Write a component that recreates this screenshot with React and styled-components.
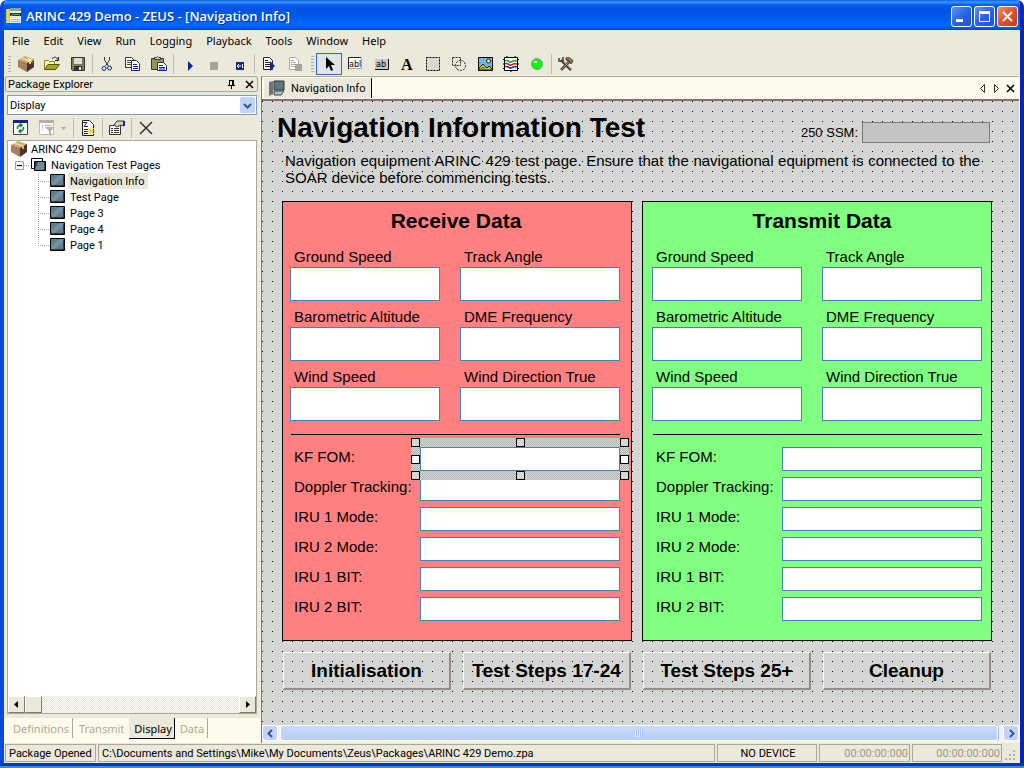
import React, { useState } from 'react'
import styled, { createGlobalStyle } from 'styled-components'

const readings = ['Ground Speed', 'Track Angle', 'Barometric Altitude', 'DME Frequency', 'Wind Speed', 'Wind Direction True']
const statuses = ['KF FOM:', 'Doppler Tracking:', 'IRU 1 Mode:', 'IRU 2 Mode:', 'IRU 1 BIT:', 'IRU 2 BIT:']
const menus = ['File', 'Edit', 'View', 'Run', 'Logging', 'Playback', 'Tools', 'Window', 'Help']
const pages = ['Navigation Info', 'Test Page', 'Page 3', 'Page 4', 'Page 1']
const steps = ['Initialisation', 'Test Steps 17-24', 'Test Steps 25+', 'Cleanup']
const handles = [['0%', '0%'], ['50%', '0%'], ['100%', '0%'], ['0%', '50%'], ['100%', '50%'], ['0%', '100%'], ['50%', '100%'], ['100%', '100%']]

const Icon = ({ children, size = 16 }) => (
    <svg width={size} height={size} viewBox={`0 0 ${size} ${size}`} aria-hidden="true">{children}</svg>
)

const AppIcon = () => (
    <Icon>
        <path d="M0 1h4v14H0z" fill="#d8c838" />
        <path d="M1 2h2M1 5h2M1 8h2M1 11h2M1 14h2" stroke="#fff8a0" />
        <path d="M4 0h11v15H4z" fill="#e6ece4" />
        <path d="M4 0h11v3H4z" fill="#8fa39a" />
        <path d="M4 5h11v3H4z" fill="#20332a" />
        <path d="M5 8l2-2 2 1 2-1 3 1" stroke="#2ee04a" fill="none" />
        <path d="M5 11.500h9M5 13.500h9" stroke="#b4bdb4" />
    </Icon>
)

const BoxIcon = ({ spark }) => (
    <Icon>
        <path d="M0 4l7-4 9 3-7 5z" fill="#cfa878" />
        <path d="M0 4l9 3v9l-9-5z" fill="#a07e5a" />
        <path d="M9 7l7-4v8l-7 5z" fill="#4b3526" />
        <path d="M3 2l9 3v3" stroke="#eddcae" strokeWidth="1.500" fill="none" />
        <path d="M1 7l7 3M1 10l7 3" stroke="#b89068" fill="none" />
        {spark && <path d="M12 0v8M8 4h8M9.500 1.500l5 5M14.500 1.500l-5 5" stroke="#fff27a" />}
        {spark && <path d="M11 3h2v2h-2z" fill="#fff" />}
    </Icon>
)

const OpenIcon = () => (
    <Icon>
        <path d="M.5 13.500v-9h4l1 1h5v3" fill="#fff6a0" stroke="#8f8a24" />
        <path d="M.5 13.500l3.500-5h11.500l-4 5z" fill="#a8a428" stroke="#55520e" />
        <path d="M8 3c2-3 5-2 6 1M14.500 1v3.500H11" stroke="#222" fill="none" />
    </Icon>
)

const SaveIcon = () => (
    <Icon>
        <path d="M1.500 1.500h13v13h-12l-1-1z" fill="#7d7c50" stroke="#333" />
        <path d="M4 2h8v6H4z" fill="#dcdcd4" />
        <path d="M4 10h8v4H4z" fill="#333" />
        <path d="M9 11h2v3H9z" fill="#eee" />
    </Icon>
)

const CutIcon = () => (
    <Icon>
        <path d="M5.500 1v3l4 6M10.500 1v3l-4 6" stroke="#333" fill="none" />
        <circle cx="5" cy="12.500" r="2" fill="none" stroke="#12278c" />
        <circle cx="10.500" cy="12" r="2" fill="none" stroke="#12278c" />
    </Icon>
)

const CopyIcon = () => (
    <Icon>
        <path d="M.5 1.500h6l3 3v7h-9z" fill="#fff" stroke="#333" />
        <path d="M2 4.500h4M2 6.500h5M2 8.500h4" stroke="#444" />
        <path d="M6.500 4.500h5l3 3v7h-8z" fill="#fff" stroke="#12278c" />
        <path d="M8 8.500h4M8 10.500h5M8 12.500h5" stroke="#12278c" />
    </Icon>
)

const PasteIcon = () => (
    <Icon>
        <path d="M.5 2.500h12v11H.5z" fill="#96955a" stroke="#333" />
        <path d="M3.500 3.500h6v-2h-2l-1-1-1 1h-2z" fill="#e8e48c" stroke="#333" />
        <path d="M6.500 6.500h6l3 3v5h-9z" fill="#fff" stroke="#12278c" />
        <path d="M8 9.500h4M8 11.500h6M8 13h6" stroke="#12278c" />
    </Icon>
)

const PlayIcon = () => <Icon><path d="M8 5l5 5-5 5z" fill="#12278c" /></Icon>
const StopIcon = () => <Icon><path d="M4 6h8v8H4z" fill="#a3a3a0" /></Icon>
const BackIcon = () => (
    <Icon>
        <path d="M4 6h8v8H4z" fill="#12278c" />
        <path d="M5 10h4M7 8l-2 2 2 2M10.500 8v4" stroke="#fff" fill="none" />
    </Icon>
)

const StepIcon = ({ off }) => (
    <Icon>
        <path d="M2.500 1.500h6l3 3v9h-9z" fill="#fff" stroke={off ? '#aaa89e' : '#222'} />
        <path d="M4 4.500h3M4 6.500h5M4 8.500h5M4 10.500h5" stroke={off ? '#aaa89e' : '#222'} />
        {off ? <path d="M8 8h7v7H8z" fill="#a3a3a0" /> : <path d="M9 5l5 5-5 5z" fill="#12278c" />}
    </Icon>
)

const PointerIcon = () => <Icon><path d="M5 1v12l3-3 2 5 2-1-2-5h4z" fill="#000" /></Icon>
const TextBoxIcon = () => (
    <Icon>
        <path d="M1 2h14v11H1z" fill="#fff" />
        <path d="M1 12.500h13.500V2" stroke="#aaa89e" fill="none" />
        <path d="M14 1.500H1.500V13" stroke="#222" fill="none" />
        <IconText x="2" y="11">abl</IconText>
    </Icon>
)
const LabelIcon = () => (
    <Icon>
        <path d="M2 3h13v10H2z" fill="#c8c8c4" />
        <path d="M2 13.500h13.500V3" stroke="#111" fill="none" />
        <IconText x="3" y="11">ab</IconText>
    </Icon>
)
const LetterIcon = () => <Icon><LetterText x="2" y="14">A</LetterText></Icon>
const FrameIcon = () => (
    <Icon>
        <path d="M1.500 1.500h13v13h-13z" fill="#d9d9d4" stroke="#000" strokeDasharray="2 1" />
    </Icon>
)
const ShapeIcon = () => (
    <Icon>
        <path d="M1.500 1.500h8v8h-8z" fill="none" stroke="#222" strokeDasharray="2 1" />
        <circle cx="9.500" cy="9.500" r="5" fill="none" stroke="#222" strokeDasharray="2 1" />
    </Icon>
)
const PictureIcon = () => (
    <Icon>
        <path d="M1.500 1.500h14v13h-14z" fill="#72b4e6" stroke="#000" />
        <circle cx="11.500" cy="5" r="2" fill="#fff27a" stroke="#222" />
        <path d="M2 12l4-4 4 4 2-2 3 3v1H2z" fill="#c8c818" stroke="#222" />
        <path d="M4 13l2-2 2 2" stroke="#188028" fill="none" />
    </Icon>
)
const ChartIcon = () => (
    <Icon>
        <path d="M1.500 1.500h13v13h-13z" fill="#fff" stroke="#000" />
        <path d="M0 3.500h2M0 8h2M0 12.500h2M14 3.500h2M14 8h2M14 12.500h2M4 0v2M8 14v2M12 0v2" stroke="#000" />
        <path d="M2 5c3-2 4 2 6 1s3-2 6-1" stroke="#00b020" fill="none" strokeWidth="1.500" />
        <path d="M2 8c3-2 4 2 6 1s3-2 6-1" stroke="#e01010" fill="none" strokeWidth="1.500" />
        <path d="M2 11c3-2 4 2 6 1s3-2 6-1" stroke="#1030d0" fill="none" strokeWidth="1.500" />
    </Icon>
)
const LedIcon = () => (
    <Icon>
        <circle cx="8" cy="8" r="5.500" fill="#0f0" stroke="#8a9a88" />
        <path d="M5 5h3v2H5z" fill="#d8ffd8" />
    </Icon>
)
const ToolsIcon = () => (
    <Icon>
        <path d="M3 4l10 10" stroke="#443c34" strokeWidth="2.500" />
        <path d="M12 5L3 14" stroke="#443c34" strokeWidth="2.500" />
        <path d="M12 5L3 14" stroke="#b08858" />
        <path d="M4 4l9 9" stroke="#a8a8a0" />
        <path d="M8 2c3-1 5 0 7 3l-2 3-2-3-3-1z" fill="#91784a" stroke="#443c34" />
        <path d="M1 2v3h4V1" stroke="#443c34" fill="none" strokeWidth="1.500" />
    </Icon>
)

const RefreshIcon = () => (
    <Icon>
        <path d="M.5.5h14v14H.5z" fill="#fff" stroke="#444" />
        <path d="M0 0h15v3H0z" fill="#12278c" />
        <path d="M4.500 9V7l2-2h2M7 3.500L9 5 7 7M10.500 7v2l-2 2h-2M8 9.500L6 11l2 2" stroke="#118a30" strokeWidth="1.500" fill="none" />
    </Icon>
)
const FilterIcon = () => (
    <Icon>
        <path d="M.5.5h14v14H.5z" fill="#fff" stroke="#c2c0b6" />
        <path d="M0 0h15v3H0z" fill="#b4b2a8" />
        <path d="M3 5.500h1M6 5.500h7M3 7.500h1M3 9.500h1" stroke="#aaa" />
        <path d="M6 7h9l-3 4v5l-2-2v-3z" fill="#b4b2a8" />
    </Icon>
)
const SortIcon = () => (
    <Icon>
        <path d="M2.500.5h7l4 4v11h-11z" fill="#fff" stroke="#222" />
        <path d="M3 2.500h4l-3 4h4" stroke="#12278c" fill="none" />
        <path d="M4 9.500h4M4 11.500h4M4 13.500h4" stroke="#222" />
        <path d="M11 7v8M7 11h8M8 8l6 6M14 8l-6 6" stroke="#e8cc20" />
    </Icon>
)
const PropertiesIcon = () => (
    <Icon>
        <path d="M.5 5.500h11v9H.5z" fill="#fff" stroke="#333" />
        <path d="M2 8.500h2M5 8.500h5M2 10.500h2M5 10.500h5M2 12.500h2M5 12.500h5" stroke="#333" />
        <path d="M5 5l3-4h7v5l-3-1-4 2z" fill="#d8d4c4" stroke="#333" />
        <path d="M14 1h2v5h-2z" fill="#12278c" />
    </Icon>
)
const DeleteIcon = () => <Icon><path d="M2 2l12 12M14 2L2 14" stroke="#333" strokeWidth="1.500" /></Icon>
const DropIcon = () => <Icon size={9}><path d="M1 3h5L3.500 6z" fill="#aca899" /></Icon>

const PageIcon = () => (
    <Icon>
        <path d="M.5 1.500h14v12H.5z" fill="#5f7f8c" stroke="#000" />
        <path d="M2 9l7-7h4v3l-8 7H2z" fill="#86a0aa" opacity=".6" />
        <path d="M14 2.500v10.500H1" stroke="#000" fill="none" />
    </Icon>
)
const PagesIcon = () => (
    <Icon>
        <path d="M.5 1.500h11v10H.5z" fill="#fff" stroke="#000" />
        <path d="M3.500 4.500h11v9h-11z" fill="#6d8a98" stroke="#000" />
        <path d="M14 5v8.500H4" stroke="#000" fill="none" />
        <path d="M4 12V5h3z" fill="#2c3c44" />
    </Icon>
)
const DocIcon = () => (
    <Icon>
        <path d="M0 2l4-1v13l-4 2z" fill="#6e7478" />
        <path d="M5 1h10v9H5z" fill="#5c7886" stroke="#333" />
        <path d="M5 11h10l-3 4H5z" fill="#b4bcc0" stroke="#444" />
    </Icon>
)
const PinIcon = () => (
    <Icon size={9}><path d="M2.500 0v5M2 .5h4.500M5.500 0v5M6.500 0v5M1 5.500h7M4.500 6v3" stroke="#000" fill="none" /></Icon>
)
const CrossIcon = () => (
    <Icon size={9}><path d="M1 1l7 7M8 1L1 8" stroke="#000" strokeWidth="1.500" /></Icon>
)
const LeftTri = () => <Icon size={9}><path d="M6.500.5v8l-4-4z" stroke="#333" fill="none" /></Icon>
const RightTri = () => <Icon size={9}><path d="M2.500.5v8l4-4z" stroke="#333" fill="none" /></Icon>
const Chevron = ({ turn }) => (
    <Icon size={9}><path d="M1 3l3.500 3.500L8 3" stroke="#3c5480" strokeWidth="2" fill="none" transform={`rotate(${turn || 0} 4.500 4.500)`} /></Icon>
)
const SolidTri = ({ turn }) => (
    <Icon size={9}><path d="M6 1v7L2 4.500z" fill="#000" transform={`rotate(${turn || 0} 4.500 4.500)`} /></Icon>
)

const tools = [
    ['New Package', <BoxIcon spark />], ['Open', <OpenIcon />], ['Save', <SaveIcon />], null,
    ['Cut', <CutIcon />], ['Copy', <CopyIcon />], ['Paste', <PasteIcon />], null,
    ['Start', <PlayIcon />], ['Stop', <StopIcon />], ['Restart', <BackIcon />], null,
    ['Start Log', <StepIcon />], ['Stop Log', <StepIcon off />],
]

const designTools = [
    ['Pointer', <PointerIcon />], ['Text Box', <TextBoxIcon />], ['Button', <LabelIcon />], ['Label', <LetterIcon />],
    ['Panel', <FrameIcon />], ['Shape', <ShapeIcon />], ['Picture', <PictureIcon />], ['Chart', <ChartIcon />],
    ['LED', <LedIcon />], null, ['Options', <ToolsIcon />],
]

function Tools({ items, active }) {
    return items.map((item, index) => item
        ? <ToolButton key={index} aria-label={item[0]} $active={item[0] === active}>{item[1]}</ToolButton>
        : <Separator key={index} />)
}

function Panel({ title, name, color, pad, titlePad, selected }) {
    return (
        <DataPanel $color={color} $pad={pad}>
            <PanelTitle $pad={titlePad}>{title}</PanelTitle>
            <Readings>
                {readings.map((label) => (
                    <Reading key={label}>
                        <FieldLabel htmlFor={name + label}>{label}</FieldLabel>
                        <ReadingInput id={name + label} />
                    </Reading>
                ))}
            </Readings>
            <Divider />
            {statuses.map((label) => (
                <StatusRow key={label}>
                    <FieldLabel htmlFor={name + label}>{label}</FieldLabel>
                    <InputWrap>
                        <StatusInput id={name + label} />
                        {label === selected && <Hatch />}
                        {label === selected && <Handles>
                            {handles.map(([x, y]) => <Handle key={x + y} $x={x} $y={y} />)}
                        </Handles>}
                    </InputWrap>
                </StatusRow>
            ))}
        </DataPanel>
    )
}

function Explorer() {
    const [page, setPage] = useState('Navigation Info')
    return (
        <Dock>
            <Caption>
                <CaptionText>Package Explorer</CaptionText>
                <TinyButton aria-label="Auto hide"><PinIcon /></TinyButton>
                <TinyButton aria-label="Close explorer"><CrossIcon /></TinyButton>
            </Caption>
            <Combo>
                <ComboSelect aria-label="View"><option>Display</option></ComboSelect>
                <ComboArrow><Chevron /></ComboArrow>
            </Combo>
            <DockTools>
                <ToolButton aria-label="Refresh"><RefreshIcon /></ToolButton>
                <ToolButton aria-label="Filter"><FilterIcon /></ToolButton>
                <DropButton aria-label="Filter options"><DropIcon /></DropButton>
                <Separator />
                <ToolButton aria-label="Sort"><SortIcon /></ToolButton>
                <Separator />
                <ToolButton aria-label="Properties"><PropertiesIcon /></ToolButton>
                <Separator />
                <ToolButton aria-label="Delete"><DeleteIcon /></ToolButton>
            </DockTools>
            <TreeBox>
                <Tree>
                    <TreeRow $indent="3px"><BoxIcon /><TreeLabel>ARINC 429 Demo</TreeLabel></TreeRow>
                    <TreeRow $indent="7px">
                        <Expander aria-label="Collapse"><Minus /></Expander>
                        <Dots $width="7px" />
                        <PagesIcon /><TreeLabel>Navigation Test Pages</TreeLabel>
                    </TreeRow>
                    <Branch>
                        {pages.map((item) => (
                            <TreeRow key={item}>
                                <Dots $width="12px" />
                                <PageIcon />
                                <TreeLabel $selected={item === page} onClick={() => setPage(item)}>{item}</TreeLabel>
                            </TreeRow>
                        ))}
                    </Branch>
                </Tree>
                <ClassicScroll>
                    <ClassicButton aria-label="Scroll left"><SolidTri /></ClassicButton>
                    <ClassicButton aria-label="Scroll thumb" />
                    <Track />
                    <ClassicButton aria-label="Scroll right"><SolidTri turn={180} /></ClassicButton>
                </ClassicScroll>
            </TreeBox>
            <DockTabs>
                <DockTab $line>Definitions</DockTab>
                <DockTab>Transmit</DockTab>
                <DockTab $active>Display</DockTab>
                <DockTab $line>Data</DockTab>
            </DockTabs>
        </Dock>
    )
}

function App() {
    return (
        <Desktop>
            <GlobalStyle />
            <AppWindow>
                <TitleBar>
                    <AppIcon />
                    <Title>ARINC 429 Demo - ZEUS - [Navigation Info]</Title>
                    <WindowButton aria-label="Minimize">
                        <Icon size={19}><path d="M4 12h7v3H4z" fill="#fff" /></Icon>
                    </WindowButton>
                    <WindowButton aria-label="Maximize">
                        <Icon size={19}><path d="M4.500 5v9.500h10V5" stroke="#fff" fill="none" /><path d="M4 4h11v3H4z" fill="#fff" /></Icon>
                    </WindowButton>
                    <WindowButton aria-label="Close" $close>
                        <Icon size={19}><path d="M5 5l9 9M14 5l-9 9" stroke="#fff" strokeWidth="2" /></Icon>
                    </WindowButton>
                </TitleBar>
                <MenuBar>
                    {menus.map((menu) => <MenuItem key={menu}>{menu}</MenuItem>)}
                </MenuBar>
                <ToolBar>
                    <Grip />
                    <Tools items={tools} />
                    <Grip />
                    <Tools items={designTools} active="Pointer" />
                </ToolBar>
                <Main>
                    <Explorer />
                    <Document>
                        <TabStrip>
                            <DocTab><DocIcon />Navigation Info</DocTab>
                            <TinyButton aria-label="Previous tab"><LeftTri /></TinyButton>
                            <TinyButton aria-label="Next tab"><RightTri /></TinyButton>
                            <TinyButton aria-label="Close tab"><CrossIcon /></TinyButton>
                        </TabStrip>
                        <Canvas>
                            <FormHeader>
                                <FormTitle>Navigation Information Test</FormTitle>
                                <SsmLabel htmlFor="ssm">250 SSM:</SsmLabel>
                                <SsmInput id="ssm" readOnly />
                            </FormHeader>
                            <Intro>
                                Navigation equipment ARINC 429 test page. Ensure that the navigational equipment is connected to the SOAR device before commencing tests.
                            </Intro>
                            <Panels>
                                <Panel title="Receive Data" name="rx" color="#ff8080" pad="0 11px 19px 7px" titlePad="2px" selected="KF FOM:" />
                                <Panel title="Transmit Data" name="tx" color="#80ff80" pad="0 9px 19px 9px" titlePad="10px" />
                            </Panels>
                            <Steps>
                                {steps.map((step) => <StepButton key={step}>{step}</StepButton>)}
                            </Steps>
                        </Canvas>
                        <LunaScroll>
                            <LunaButton aria-label="Scroll left"><Chevron turn={90} /></LunaButton>
                            <LunaThumb aria-label="Scroll thumb"><ThumbGrip /></LunaThumb>
                            <LunaButton aria-label="Scroll right"><Chevron turn={-90} /></LunaButton>
                        </LunaScroll>
                    </Document>
                </Main>
                <StatusBar>
                    <StatusCell $width="91px">Package Opened</StatusCell>
                    <StatusCell $grow>C:\Documents and Settings\Mike\My Documents\Zeus\Packages\ARINC 429 Demo.zpa</StatusCell>
                    <StatusCell $width="100px" $align="center">NO DEVICE</StatusCell>
                    <StatusCell $width="91px" $align="flex-end" $muted>00:00:00:000</StatusCell>
                    <StatusCell $width="90px" $align="flex-end" $muted>00:00:00:000</StatusCell>
                    <SizeGrip>
                        <Icon size={13}><path d="M9 1h2v2H9zM9 5h2v2H9zM5 5h2v2H5zM9 9h2v2H9zM5 9h2v2H5zM1 9h2v2H1z" fill="#b8b4a4" /></Icon>
                    </SizeGrip>
                </StatusBar>
            </AppWindow>
        </Desktop>
    )
}

export default App

const GlobalStyle = createGlobalStyle`
    *{
        box-sizing: border-box;
    }

    body{
        margin: 0;
        font-family: Roboto, "Liberation Sans", sans-serif;
        font-size: 11px;
        color: #000;
    }

    button, input, select{
        font: inherit;
        color: inherit;
        margin: 0;
        padding: 0;
        border: 0;
        border-radius: 0;
        background: none;
        min-width: 0;
    }

    svg{
        display: block;
        flex-shrink: 0;
    }
`

const IconText = styled.text`
    font: 9px "DejaVu Sans Condensed", sans-serif;
`

const LetterText = styled.text`
    font: bold 16px "Liberation Serif", serif;
`

const Desktop = styled.div`
    display: flex;
    min-height: 100vh;
    padding-bottom: 2px;
    background: linear-gradient(#fff 50%, #3f86dc 50%);
`

const AppWindow = styled.div`
    flex: 1;
    min-width: 0;
    display: flex;
    flex-direction: column;
    background: #ebe9d9;
    border: solid #0a48e0;
    border-width: 0 4px 3px;
    border-right-color: #0426b8;
    border-bottom-color: #0434cc;
    border-radius: 7px 7px 0 0;
    overflow: hidden;
`

const TitleBar = styled.header`
    display: flex;
    align-items: center;
    gap: 2px;
    height: 30px;
    margin: 0 -4px;
    padding: 2px 6px 0;
    background: linear-gradient(#0b5fe0 0, #3d95ff 2px, #0a5cf0 5px, #0054e4 9px, #0058ea 16px, #0068fc 24px, #0064f8 27px, #0044c8 30px);
`

const Title = styled.h1`
    flex: 1;
    margin: 0 0 0 2px;
    font: 600 13px/18px "Open Sans", sans-serif;
    color: #fff;
    text-shadow: 1px 1px #0a3290;
`

const WindowButton = styled.button`
    width: 21px;
    height: 21px;
    border: 1px solid #fff;
    border-radius: 3px;
    background: ${props => props.$close ? 'linear-gradient(135deg, #f0906c, #e0502c 50%, #c83c14)' : 'linear-gradient(135deg, #5c94f4, #2c64e4 50%, #1c50d8)'};
`

const MenuBar = styled.nav`
    display: flex;
    height: 22px;
    padding: 0 0 2px 2px;
`

const MenuItem = styled.button`
    padding: 0 6px;
    margin-right: 2px;
    font: 11px "Noto Sans", sans-serif;
`

const ToolBar = styled.div`
    display: flex;
    align-items: center;
    height: 24px;
    padding-left: 1px;
    border-bottom: 1px solid #f4f2e8;
`

const Grip = styled.span`
    width: 8px;
    height: 16px;
    border: solid transparent;
    border-width: 0 2px 0 3px;
    background: repeating-linear-gradient(#b0ad9c 0 1px, transparent 1px 3px) padding-box;
`

const ToolButton = styled.button`
    display: flex;
    align-items: center;
    justify-content: center;
    width: 26px;
    height: 22px;
    border: 1px solid ${props => props.$active ? '#316ac5' : 'transparent'};
    background: ${props => props.$active ? '#dfe5ea' : 'none'};
`

const Separator = styled.span`
    width: 3px;
    height: 20px;
    border: solid transparent;
    border-width: 0 1px;
    background: #c0bdac padding-box;
`

const Main = styled.main`
    flex: 1;
    display: flex;
    min-height: 0;
`

const Dock = styled.aside`
    display: flex;
    flex-direction: column;
    flex: 0 0 257px;
    border-right: 1px solid #f6f4e8;
`

const Caption = styled.div`
    display: flex;
    align-items: center;
    gap: 9px;
    height: 16px;
    margin: 0 2px 0 1px;
    padding: 0 3px 0 2px;
    border: 1px solid #aca899;
    border-radius: 2px;
`

const CaptionText = styled.h2`
    flex: 1;
    margin: 0;
    font: inherit;
`

const TinyButton = styled.button`
    display: flex;
`

const Combo = styled.div`
    display: flex;
    height: 20px;
    margin: 3px 3px 0;
    border: 1px solid #7f9db9;
    background: #fff;
`

const ComboSelect = styled.select`
    flex: 1;
    appearance: none;
    padding-left: 2px;
    outline: none;
`

const ComboArrow = styled.span`
    display: flex;
    align-items: center;
    justify-content: center;
    width: 15px;
    margin: 1px;
    border-radius: 2px;
    background: #c1d3fb;
`

const DockTools = styled.div`
    display: flex;
    align-items: center;
    height: 25px;
    padding: 1px 0 0 4px;
`

const DropButton = styled.button`
    width: 12px;
    height: 9px;
`

const TreeBox = styled.div`
    flex: 1;
    display: flex;
    flex-direction: column;
    margin: 0 3px;
    border: 1px solid #aca899;
    background: #fff;
`

const Tree = styled.ul`
    flex: 1;
    margin: 0;
    padding: 0;
    list-style: none;
`

const Branch = styled.ul`
    margin: 0 0 0 30px;
    padding: 0;
    list-style: none;
    background: repeating-linear-gradient(#aaa 0 1px, transparent 1px 2px) 0 0 / 1px calc(100% - 7px) no-repeat;
`

const TreeRow = styled.li`
    display: flex;
    align-items: center;
    height: 16px;
    padding-left: ${props => props.$indent || 0};
`

const TreeLabel = styled.button`
    height: 16px;
    padding: 0 4px 0 2px;
    margin-left: 2px;
    background: ${props => props.$selected ? '#ebe9d9' : 'none'};
`

const Expander = styled.button`
    display: flex;
    align-items: center;
    justify-content: center;
    width: 9px;
    height: 9px;
    border: 1px solid #8ca2b8;
    border-radius: 1px;
    background: #f4f3ec;
`

const Minus = styled.span`
    width: 5px;
    height: 1px;
    background: #000;
`

const Dots = styled.span`
    width: ${props => props.$width};
    height: 1px;
    background: repeating-linear-gradient(90deg, #aaa 0 1px, transparent 1px 2px);
`

const ClassicScroll = styled.div`
    display: flex;
    height: 17px;
`

const ClassicButton = styled.button`
    display: flex;
    align-items: center;
    justify-content: center;
    width: 17px;
    border: 1px solid;
    border-color: #fff #85796f #85796f #fff;
    background: #ebe9d9;
`

const Track = styled.div`
    flex: 1;
    background: repeating-conic-gradient(#e4e1d2 0 25%, #fff 0 50%) 0 0 / 2px 2px;
`

const DockTabs = styled.div`
    display: flex;
    align-items: flex-start;
    height: 25px;
    margin-top: 4px;
    padding-left: 4px;
    background: #fffbea;
`

const DockTab = styled.button`
    height: 21px;
    padding: 0 ${props => props.$active ? '2px 0 5px' : '4px 0 5px'};
    background: ${props => props.$active ? '#ebe9d9' : 'none'};
    color: ${props => props.$active ? '#000' : '#aca899'};
    border-right: 1px solid ${props => props.$active ? '#000' : 'transparent'};
    border-bottom: 1px solid ${props => props.$active ? '#000' : 'transparent'};
    font-family: "Noto Sans", sans-serif;
    ${props => props.$line && 'box-shadow: inset -1px 0 #aca899;'}
`

const Document = styled.section`
    flex: 1;
    min-width: 0;
    display: flex;
    flex-direction: column;
    border-left: 1px solid #85796f;
    border-right: 1px solid #f6f4e8;
`

const TabStrip = styled.div`
    display: flex;
    align-items: center;
    gap: 5px;
    height: 25px;
    padding-right: 4px;
    border: solid #aca899;
    border-width: 1px 0 2px;
    border-bottom-color: #85706c;
    background: #fffbea;
`

const DocTab = styled.button`
    display: flex;
    align-items: center;
    gap: 6px;
    height: 20px;
    margin: 0 auto 0 2px;
    padding: 0 6px 0 5px;
    border-right: 1px solid #000;
    background: #ebe9d9;
`

/* 10px designer grid */
const Canvas = styled.div`
    flex: 1;
    padding: 11px 27px 34px 20px;
    background: conic-gradient(from 270deg at 1px 1px, #000 90deg, transparent 0) 0 0 / 10px 10px, #d4d6d3;
    font-family: "Liberation Sans", Arial, sans-serif;
    font-size: 15px;
`

const FormHeader = styled.div`
    display: flex;
    align-items: center;
    gap: 4px;
    height: 40px;
    padding-right: 2px;
`

const FormTitle = styled.h2`
    flex: 1;
    margin: 0 0 8px -5px;
    font-size: 28px;
    line-height: 32px;
`

const SsmLabel = styled.label`
    font-size: 13px;
`

const SsmInput = styled.input`
    width: 128px;
    height: 21px;
    border: 1px solid #7b7b7b;
    background: #c6c3c3;
`

const Intro = styled.p`
    margin: 0 12px 15px 3px;
    line-height: 17px;
    text-align: justify;
`

const Panels = styled.div`
    display: flex;
    gap: 10px;
`

const DataPanel = styled.section`
    flex: 1;
    padding: ${props => props.$pad};
    border: 1px solid #000;
    background: ${props => props.$color};
`

const PanelTitle = styled.h3`
    margin: 0;
    padding: 7px 0 0 ${props => props.$pad};
    height: 45px;
    font-size: 21px;
    line-height: 24px;
    text-align: center;
`

const Readings = styled.div`
    display: grid;
    grid-template-columns: 15fr 16fr;
    gap: 6px 20px;
`

const Reading = styled.div`
    display: flex;
    flex-direction: column;
`

const FieldLabel = styled.label`
    padding-left: 4px;
    line-height: 20px;
    white-space: nowrap;
`

const ReadingInput = styled.input`
    width: 100%;
    height: 34px;
    border: 1px solid #4682b4;
    background: #fff;
`

const Divider = styled.hr`
    height: 1px;
    margin: 13px 0 12px 1px;
    border: 0;
    background: #000;
`

const StatusRow = styled.div`
    display: grid;
    grid-template-columns: 13fr 20fr;

    & + &{
        margin-top: 6px;
    }
`

const InputWrap = styled.div`
    position: relative;
    display: flex;
    min-width: 0;
`

const StatusInput = styled.input`
    flex: 1;
    height: 24px;
    border: 1px solid #4682b4;
    background: #fff;
`

const Hatch = styled.div`
    position: absolute;
    inset: -9px;
    z-index: 1;
    border: 9px solid transparent;
    background: repeating-conic-gradient(#b2b4b2 0 25%, #d6d8d6 0 50%) 0 0 / 2px 2px border-box;
    mask: linear-gradient(#000 0 0) padding-box exclude, linear-gradient(#000 0 0) border-box;
    pointer-events: none;
`

const Handles = styled.div`
    position: absolute;
    inset: -9px 0 0 -9px;
    z-index: 2;
    pointer-events: none;
`

const Handle = styled.span`
    position: absolute;
    left: ${props => props.$x};
    top: ${props => props.$y};
    width: 9px;
    height: 9px;
    border: 1px solid #000;
    background: ${props => props.$y === '50%' ? '#fff' : '#d4d6d3'};
`

const Steps = styled.div`
    display: grid;
    grid-template-columns: repeat(4, 1fr);
    gap: 12px;
    margin: 11px 1px 0;
`

const StepButton = styled.button`
    height: 38px;
    border: solid;
    border-width: 1px 2px 2px 1px;
    border-color: #fff #9a8d88 #9a8d88 #fff;
    font-size: 19px;
    font-weight: bold;
    white-space: nowrap;
`

const LunaScroll = styled.div`
    display: flex;
    gap: 2px;
    height: 18px;
    padding-bottom: 1px;
    border-bottom: 1px solid #f6f4e8;
    background: #f3f2ec;
`

const LunaButton = styled.button`
    display: flex;
    align-items: center;
    justify-content: center;
    width: 16px;
    border: 1px solid #fff;
    border-radius: 3px;
    background: #c1d3fb;
`

const LunaThumb = styled.button`
    flex: 1;
    display: flex;
    align-items: center;
    justify-content: center;
    margin-right: 3px;
    border: 1px solid #fff;
    border-radius: 3px;
    box-shadow: 1px 0 #9cb4ec;
    background: linear-gradient(#cbdafc, #b8ccf8);
`

const ThumbGrip = styled.span`
    width: 8px;
    height: 7px;
    background: repeating-linear-gradient(90deg, #eef4fe 0 1px, #a0bcf4 1px 2px);
`

const StatusBar = styled.footer`
    display: flex;
    gap: 2px;
    height: 20px;
    padding: 1px 1px;
`

const StatusCell = styled.div`
    display: flex;
    align-items: center;
    justify-content: ${props => props.$align || 'flex-start'};
    flex: ${props => props.$grow ? '1 1 0' : `0 0 ${props.$width}`};
    min-width: 0;
    padding: 0 1px 0 3px;
    border: 1px solid #aca899;
    color: ${props => props.$muted ? '#9b9888' : '#000'};
    white-space: nowrap;
    overflow: hidden;
`

const SizeGrip = styled.div`
    display: flex;
    align-items: flex-end;
    width: 15px;
`
